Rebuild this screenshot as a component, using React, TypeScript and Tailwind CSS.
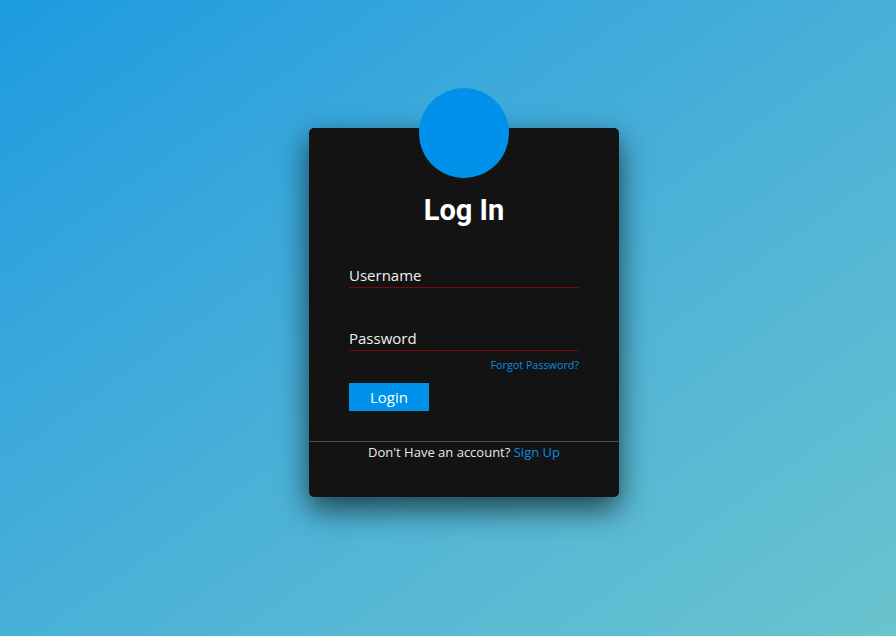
export default function App() {
  return (
    <main
      className="min-h-screen w-full bg-linear-to-br from-[#1b9be0] to-[#6ac4ce] flex justify-center pl-[32px]"
      style={{ fontFamily: "'Open Sans', Lato, sans-serif" }}
    >
      <div className="mt-[128px] w-[310px] h-[369px] bg-[#131313] rounded-[5px] shadow-[0_12px_30px_rgba(0,0,0,0.65)] flex flex-col items-center">
        <div className="-mt-10 w-[90px] h-[90px] rounded-full bg-[#0091ea]" />
        <h1
          className="mt-[14px] text-[29px] leading-[36px] font-bold text-white"
          style={{ fontFamily: "Roboto, sans-serif" }}
        >
          Log In
        </h1>

        <form className="w-full px-10 mt-[37px] flex flex-col">
          <div className="border-b border-[#7a0a0a] pb-[2px]">
            <input
              className="block w-full h-[20px] bg-transparent outline-none text-[15px] leading-[20px] text-white placeholder:text-[#f0f0f0]"
              placeholder="Username"
            />
          </div>
          <div className="mt-[40px] border-b border-[#7a0a0a] pb-[2px]">
            <input
              type="password"
              className="block w-full h-[20px] bg-transparent outline-none text-[15px] leading-[20px] text-white placeholder:text-[#f0f0f0]"
              placeholder="Password"
            />
          </div>
          <a className="mt-[7px] self-end text-[10.75px] leading-[14px] text-[#0a8de0]">
            Forgot Password?
          </a>
          <button
            type="button"
            className="mt-[11px] w-[80px] h-[28px] bg-[#0091ea] text-white text-[15px]"
          >
            Login
          </button>
        </form>

        <div className="mt-[30px] w-full border-t border-[#4a4a4a]" />
        <p className="mt-[1px] text-[13px] leading-[18px] text-[#e8e8e8]">
          Don't Have an account? <span className="text-[#0a8de0]">Sign Up</span>
        </p>
      </div>
    </main>
  );
}
